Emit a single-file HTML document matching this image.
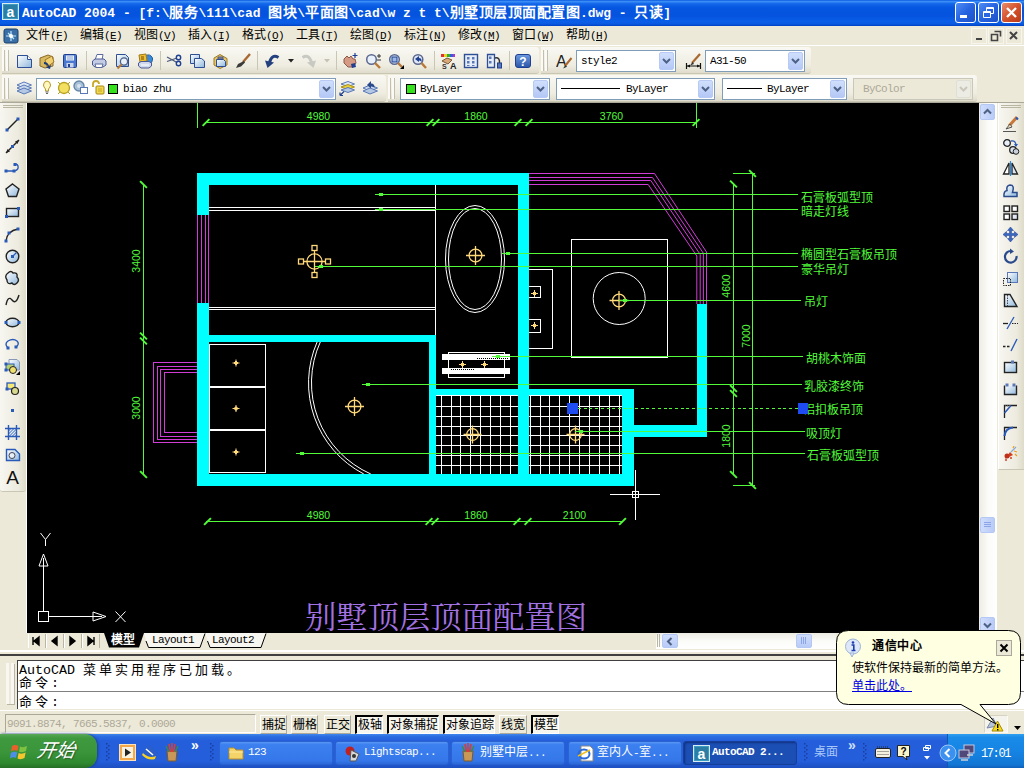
<!DOCTYPE html>
<html lang="zh-CN"><head><meta charset="utf-8"><title>AutoCAD 2004</title>
<style>
html,body{margin:0;padding:0}
body{width:1024px;height:768px;overflow:hidden;background:#ECE9D8;position:relative;font-family:"Liberation Sans",sans-serif;font-size:12px;color:#000;line-height:1}
div,span,a{box-sizing:border-box}
.a{position:absolute}
.m{font-family:"Liberation Mono",monospace;font-size:11px;letter-spacing:-0.6px}
.c{font-size:12px;letter-spacing:0;font-weight:300}
.t{white-space:nowrap;overflow:visible}
#title{left:0;top:0;width:1024px;height:26px;background:linear-gradient(180deg,#0a5ae0 0%,#3d8ff7 6%,#1468ea 14%,#0556e0 30%,#0553de 60%,#0a5ee8 82%,#0a5ae0 92%,#0041c4 100%)}
#ttext{left:22px;top:4px;color:#fff;font-family:"Liberation Mono",monospace;font-weight:bold;font-size:13px;letter-spacing:-0.04px;white-space:nowrap;line-height:17px}
#ttext .k{font-family:"Liberation Sans",sans-serif;font-size:14px;letter-spacing:0.5px;font-weight:bold}
.wb{top:2px;width:21px;height:21px;border:1px solid #fff;border-radius:3px;background:linear-gradient(135deg,#4f8df5 0%,#2663e0 50%,#1d52c8 100%)}
#menu{left:0;top:26px;width:1024px;height:20px;background:#ECE9D8}
.mi{top:30px;height:14px;white-space:nowrap;line-height:13px}
.tb{background:linear-gradient(180deg,#f9f8f3 0%,#efede1 70%,#dfdccc 100%);border-radius:0 3px 3px 0;border-bottom:1px solid #c9c6b4}
.dd{background:#fff;border:1px solid #7f9db9;height:22px}
.ddb{top:2px;width:16px;height:16px;border-radius:2px;background:linear-gradient(180deg,#cddcfb 0%,#b5c8f5 100%);border:1px solid #b8c9f0}
.sep{width:1px;background:#c5c2b0;border-right:1px solid #fff;width:2px}
.grip{width:3px;border-left:1px solid #b9b6a4;border-right:1px solid #b9b6a4}
</style></head><body>
<div id="title" class="a"></div>
<svg class="a" style="left:2px;top:3px" width="17" height="17" viewBox="0 0 17 17" ><rect x="0.5" y="0.5" width="16" height="16" fill="#3c9cc0" stroke="#d8ecf4"/><rect x="2" y="2" width="13" height="13" fill="#2a7ea6"/><text x="8.5" y="13.5" font-family="Liberation Sans,sans-serif" font-weight="bold" font-size="14" fill="#fff" text-anchor="middle">a</text></svg>
<div id="ttext" class="a">AutoCAD 2004 - [f:\<span class="k">服务</span>\111\cad <span class="k">图块</span>\<span class="k">平面图</span>\cad\w z t t\<span class="k">别墅顶层顶面配置图</span>.dwg - <span class="k">只读</span>]</div>
<div class="a wb" style="left:955px"></div><div class="a wb" style="left:978px"></div>
<div class="a wb" style="left:1001px;background:linear-gradient(135deg,#e88c6c 0%,#d4532c 50%,#b83a18 100%)"></div>
<svg class="a" style="left:955px;top:2px" width="21" height="21" viewBox="0 0 21 21" ><rect x="5" y="13" width="7" height="3" fill="#fff"/></svg>
<svg class="a" style="left:978px;top:2px" width="21" height="21" viewBox="0 0 21 21" ><path d="M8.500 5.500H15.500V11.500H8.500ZM8 6.500H16" stroke="#fff" stroke-width="1" fill="none"/><path d="M5.500 9.500H12.500V15.500H5.500Z" fill="#2a66e0" stroke="#fff"/><path d="M5 10.500H13" stroke="#fff"/></svg>
<svg class="a" style="left:1001px;top:2px" width="21" height="21" viewBox="0 0 21 21" ><path d="M6 6L15 15M15 6L6 15" stroke="#fff" stroke-width="2.4"/></svg>
<div id="menu" class="a"></div>
<svg class="a" style="left:3px;top:28px" width="17" height="16" viewBox="0 0 17 16" ><rect x="1" y="1" width="14" height="14" rx="2" fill="#3a6ea5" stroke="#1b3e6e"/><path d="M8 3V13M3 8H13M5 5L11 11" stroke="#bfe8ff" stroke-width="1.2"/><circle cx="8" cy="8" r="2" fill="#fff"/></svg>
<div class="a mi m" style="left:26px"><span class="c">文件</span>(<u>F</u>)</div>
<div class="a mi m" style="left:80px"><span class="c">编辑</span>(<u>E</u>)</div>
<div class="a mi m" style="left:134px"><span class="c">视图</span>(<u>V</u>)</div>
<div class="a mi m" style="left:188px"><span class="c">插入</span>(<u>I</u>)</div>
<div class="a mi m" style="left:242px"><span class="c">格式</span>(<u>O</u>)</div>
<div class="a mi m" style="left:296px"><span class="c">工具</span>(<u>T</u>)</div>
<div class="a mi m" style="left:350px"><span class="c">绘图</span>(<u>D</u>)</div>
<div class="a mi m" style="left:404px"><span class="c">标注</span>(<u>N</u>)</div>
<div class="a mi m" style="left:458px"><span class="c">修改</span>(<u>M</u>)</div>
<div class="a mi m" style="left:512px"><span class="c">窗口</span>(<u>W</u>)</div>
<div class="a mi m" style="left:566px"><span class="c">帮助</span>(<u>H</u>)</div>
<svg class="a" style="left:970px;top:27px" width="54" height="18" viewBox="0 0 54 18" ><rect x="6" y="11" width="6" height="2" fill="#444"/><path d="M24.500 4.500H30.500V9.500M21.500 7.500H27.500V13.500H21.500Z" stroke="#444" stroke-width="1.6" fill="none"/><path d="M40 5L47 12M47 5L40 12" stroke="#444" stroke-width="2"/><rect x="1.5" y="1.500" width="15" height="15" fill="none" stroke="#f6f5ee"/><rect x="18.500" y="1.500" width="15" height="15" fill="none" stroke="#f6f5ee"/><rect x="36.500" y="1.500" width="15" height="15" fill="none" stroke="#f6f5ee"/></svg>
<div class="a" style="left:0;top:45px;width:1024px;height:1px;background:#fff"></div>
<div class="a tb" style="left:2px;top:47px;width:537px;height:27px"></div>
<div class="a tb" style="left:541px;top:47px;width:270px;height:27px"></div>
<div class="a tb" style="left:2px;top:75px;width:384px;height:27px"></div>
<div class="a tb" style="left:388px;top:75px;width:589px;height:27px"></div>
<div class="a" style="left:2px;top:50px;height:21px;width:3px;background:#fbfaf6;border-right:1px solid #c2bfad"></div><div class="a" style="left:6px;top:50px;height:21px;width:3px;background:#fbfaf6;border-right:1px solid #c2bfad"></div>
<div class="a" style="left:541px;top:50px;height:21px;width:3px;background:#fbfaf6;border-right:1px solid #c2bfad"></div><div class="a" style="left:545px;top:50px;height:21px;width:3px;background:#fbfaf6;border-right:1px solid #c2bfad"></div>
<div class="a" style="left:2px;top:78px;height:21px;width:3px;background:#fbfaf6;border-right:1px solid #c2bfad"></div><div class="a" style="left:6px;top:78px;height:21px;width:3px;background:#fbfaf6;border-right:1px solid #c2bfad"></div>
<div class="a" style="left:388px;top:78px;height:21px;width:3px;background:#fbfaf6;border-right:1px solid #c2bfad"></div><div class="a" style="left:392px;top:78px;height:21px;width:3px;background:#fbfaf6;border-right:1px solid #c2bfad"></div>
<div class="a" style="left:86px;top:51px;width:1px;height:19px;background:#c9c6b3"></div>
<div class="a" style="left:160px;top:51px;width:1px;height:19px;background:#c9c6b3"></div>
<div class="a" style="left:257px;top:51px;width:1px;height:19px;background:#c9c6b3"></div>
<div class="a" style="left:336px;top:51px;width:1px;height:19px;background:#c9c6b3"></div>
<div class="a" style="left:434px;top:51px;width:1px;height:19px;background:#c9c6b3"></div>
<div class="a" style="left:509px;top:51px;width:1px;height:19px;background:#c9c6b3"></div>
<div class="a" style="left:576px;top:50px;width:100px;height:22px;background:#fff;border:1px solid #7f9db9"></div><div class="a m t" style="left:581px;top:56px">style2</div><div class="a" style="left:659px;top:52px;width:15px;height:18px;border-radius:2px;background:linear-gradient(180deg,#d0dffc,#b4c8f6);border:1px solid #b7caf5"><svg class="a" style="left:2px;top:5px" width="9" height="7" viewBox="0 0 9 7"><path d="M1 1L4.5 4.5L8 1" stroke="#4d6185" stroke-width="2" fill="none"/></svg></div>
<div class="a" style="left:705px;top:50px;width:100px;height:22px;background:#fff;border:1px solid #7f9db9"></div><div class="a m t" style="left:710px;top:56px">A31-50</div><div class="a" style="left:788px;top:52px;width:15px;height:18px;border-radius:2px;background:linear-gradient(180deg,#d0dffc,#b4c8f6);border:1px solid #b7caf5"><svg class="a" style="left:2px;top:5px" width="9" height="7" viewBox="0 0 9 7"><path d="M1 1L4.5 4.5L8 1" stroke="#4d6185" stroke-width="2" fill="none"/></svg></div>
<div class="a" style="left:36px;top:78px;width:300px;height:22px;background:#fff;border:1px solid #7f9db9"></div><div class="a m t" style="left:123px;top:84px">biao zhu</div><div class="a" style="left:108px;top:84px;width:10px;height:10px;background:#35e01c;border:1px solid #000"></div><div class="a" style="left:319px;top:80px;width:15px;height:18px;border-radius:2px;background:linear-gradient(180deg,#d0dffc,#b4c8f6);border:1px solid #b7caf5"><svg class="a" style="left:2px;top:5px" width="9" height="7" viewBox="0 0 9 7"><path d="M1 1L4.5 4.5L8 1" stroke="#4d6185" stroke-width="2" fill="none"/></svg></div>
<div class="a" style="left:400px;top:78px;width:150px;height:22px;background:#fff;border:1px solid #7f9db9"></div><div class="a m t" style="left:420px;top:84px">ByLayer</div><div class="a" style="left:406px;top:84px;width:10px;height:10px;background:#35e01c;border:1px solid #000"></div><div class="a" style="left:533px;top:80px;width:15px;height:18px;border-radius:2px;background:linear-gradient(180deg,#d0dffc,#b4c8f6);border:1px solid #b7caf5"><svg class="a" style="left:2px;top:5px" width="9" height="7" viewBox="0 0 9 7"><path d="M1 1L4.5 4.5L8 1" stroke="#4d6185" stroke-width="2" fill="none"/></svg></div>
<div class="a" style="left:556px;top:78px;width:159px;height:22px;background:#fff;border:1px solid #7f9db9"></div><div class="a m t" style="left:626px;top:84px">ByLayer</div><div class="a" style="left:561px;top:88px;width:59px;height:1px;background:#000"></div><div class="a" style="left:698px;top:80px;width:15px;height:18px;border-radius:2px;background:linear-gradient(180deg,#d0dffc,#b4c8f6);border:1px solid #b7caf5"><svg class="a" style="left:2px;top:5px" width="9" height="7" viewBox="0 0 9 7"><path d="M1 1L4.5 4.5L8 1" stroke="#4d6185" stroke-width="2" fill="none"/></svg></div>
<div class="a" style="left:722px;top:78px;width:125px;height:22px;background:#fff;border:1px solid #7f9db9"></div><div class="a m t" style="left:767px;top:84px">ByLayer</div><div class="a" style="left:727px;top:88px;width:35px;height:1px;background:#000"></div><div class="a" style="left:830px;top:80px;width:15px;height:18px;border-radius:2px;background:linear-gradient(180deg,#d0dffc,#b4c8f6);border:1px solid #b7caf5"><svg class="a" style="left:2px;top:5px" width="9" height="7" viewBox="0 0 9 7"><path d="M1 1L4.5 4.5L8 1" stroke="#4d6185" stroke-width="2" fill="none"/></svg></div>
<div class="a" style="left:853px;top:78px;width:120px;height:22px;background:#ECE9D8;border:1px solid #c9c7ba"></div><div class="a m t" style="left:863px;top:84px;color:#aca899">ByColor</div><div class="a" style="left:956px;top:80px;width:15px;height:18px;border-radius:2px;background:#ecebe4;border:1px solid #e0dfd6"><svg class="a" style="left:2px;top:5px" width="9" height="7" viewBox="0 0 9 7"><path d="M1 1L4.5 4.5L8 1" stroke="#c9c7ba" stroke-width="2" fill="none"/></svg></div>
<div class="a" style="left:0;top:102px;width:1024px;height:1px;background:#aca899"></div>
<svg width="0" height="0" style="position:absolute"><defs><linearGradient id="gb" x1="0" y1="0" x2="1" y2="1"><stop offset="0" stop-color="#ffffff"/><stop offset="1" stop-color="#8fb8dc"/></linearGradient><linearGradient id="gy" x1="0" y1="0" x2="1" y2="1"><stop offset="0" stop-color="#fff6b0"/><stop offset="1" stop-color="#e0b838"/></linearGradient><linearGradient id="gd" x1="0" y1="0" x2="0" y2="1"><stop offset="0" stop-color="#6f9be0"/><stop offset="1" stop-color="#2a56a8"/></linearGradient></defs></svg>
<svg class="a" style="left:16px;top:53px" width="17" height="17" viewBox="0 0 17 17"><path d="M1.500 2.500H11.500L15.500 6.500V14.500H1.500Z" fill="url(#gb)" stroke="#2f4f94"/><path d="M11.500 2.500V6.500H15.500" fill="#fff" stroke="#2f4f94"/></svg>
<svg class="a" style="left:39px;top:53px" width="17" height="17" viewBox="0 0 17 17"><path d="M1 5L9 2L14 4V13L6 15L1 13Z" fill="#d8b860" stroke="#8a6a28"/><path d="M6 7L13 3L15 9L8 14Z" fill="#f0d070" stroke="#a07828"/><path d="M5 9Q9 9 10 13L12 12L11 16L7 14.500L9 13.500Q8 11 5 11Z" fill="#1a3a78"/></svg>
<svg class="a" style="left:62px;top:53px" width="17" height="17" viewBox="0 0 17 17"><rect x="1.500" y="1.500" width="13" height="13" rx="1" fill="#4a78d0" stroke="#1f3f90"/><rect x="4" y="2.500" width="8" height="5" fill="#e8eef8"/><path d="M5 4H11M5 6H11" stroke="#8aa8d8"/><rect x="4.500" y="10" width="7" height="4.500" fill="#c8d4e8"/><rect x="6" y="11" width="2" height="3" fill="#1f3f90"/></svg>
<svg class="a" style="left:91px;top:53px" width="17" height="17" viewBox="0 0 17 17"><path d="M4 7L6 1.500H12L11 7Z" fill="#fff" stroke="#5a6a9c"/><path d="M1.500 8L4 6H13L15 8V12L12 14H4L1.500 12Z" fill="#c4cce4" stroke="#4a5a94"/><path d="M4 11H12L11 14.500H5Z" fill="#fff" stroke="#5a6a9c"/></svg>
<svg class="a" style="left:114px;top:53px" width="17" height="17" viewBox="0 0 17 17"><path d="M2.500 1.500H11.500L14.500 4.500V13.500H2.500Z" fill="url(#gb)" stroke="#2f4f94"/><circle cx="10" cy="8.500" r="3.600" fill="#e8f0fa" stroke="#506088" stroke-width="1.300"/><path d="M7.500 11.500L3.500 15.500" stroke="#b87838" stroke-width="2"/></svg>
<svg class="a" style="left:137px;top:53px" width="17" height="17" viewBox="0 0 17 17"><path d="M8 3Q13 0 15.500 5Q16 10 11 12L7 9Z" fill="#3a8ad8" stroke="#1f5aa8"/><path d="M2 2L9 1L10 8L3 9Z" fill="#f0c030" stroke="#a07818"/><path d="M4 4H7M4 6H7" stroke="#704808"/><path d="M1.500 10L4 8.500H12L14.500 10V13L12 15H4L1.500 13Z" fill="#d0d8ec" stroke="#4a5a94"/><path d="M4 12H12" stroke="#fff"/></svg>
<svg class="a" style="left:166px;top:53px" width="17" height="17" viewBox="0 0 17 17"><path d="M1 4L11 9.500M1 8.500L11 5" stroke="#4a5a7c" stroke-width="1.300"/><circle cx="12.500" cy="4.500" r="2.200" fill="none" stroke="#1f3f90" stroke-width="1.400"/><circle cx="12.500" cy="10.500" r="2.200" fill="none" stroke="#1f3f90" stroke-width="1.400"/></svg>
<svg class="a" style="left:189px;top:53px" width="17" height="17" viewBox="0 0 17 17"><path d="M1.500 1.500H10.500V10.500H1.500Z" fill="url(#gb)" stroke="#2f4f94"/><path d="M5.500 5.500H12.500L15.500 8V14.500H5.500Z" fill="url(#gb)" stroke="#2f4f94"/></svg>
<svg class="a" style="left:212px;top:53px" width="17" height="17" viewBox="0 0 17 17"><path d="M2 5L8 1.500L15 5.500V12L8 15.500L2 12Z" fill="#e8c868" stroke="#9a7a28"/><path d="M6 4H11V6H6Z" fill="#8890a8" stroke="#505878"/><path d="M4.500 6.500H11.500L13.500 8.500V13.500H4.500Z" fill="url(#gb)" stroke="#2f4f94"/></svg>
<svg class="a" style="left:235px;top:53px" width="17" height="17" viewBox="0 0 17 17"><path d="M15 1L8 9" stroke="#a86830" stroke-width="2.400"/><path d="M9 8L3 11L1 15L6 13.500L10 9.500Z" fill="#3a3a3a"/></svg>
<svg class="a" style="left:264px;top:53px" width="17" height="17" viewBox="0 0 17 17"><path d="M14.500 4.500Q8 0.500 5.500 9.500" fill="none" stroke="#23417e" stroke-width="3"/><path d="M1 7.500L10 9.500L3.500 15Z" fill="#23417e"/></svg>
<svg class="a" style="left:300px;top:53px" width="17" height="17" viewBox="0 0 17 17"><path d="M2.500 4.500Q9 0.500 11.500 9.500" fill="none" stroke="#c9c9c3" stroke-width="3"/><path d="M16 7.500L7 9.500L13.500 15Z" fill="#c9c9c3"/></svg>
<svg class="a" style="left:342px;top:53px" width="17" height="17" viewBox="0 0 17 17"><path d="M2 6L5 3L7 5L9 3L11 6L13 6L14 10L11 14H6L2 10Z" fill="#d49a84" stroke="#8a5a48"/><path d="M9 11L13 10L14 14L10 15Z" fill="#1f3f90"/><path d="M13 0V5M10.500 2.500H15.500" stroke="#1f3f90" stroke-width="1.200"/></svg>
<svg class="a" style="left:365px;top:53px" width="17" height="17" viewBox="0 0 17 17"><circle cx="6.500" cy="6.500" r="4.800" fill="#e8f0fa" stroke="#5a6890" stroke-width="1.500"/><path d="M10 10L15 15" stroke="#b87838" stroke-width="2.400"/><path d="M12 3H16M14 1V5M12 7H16" stroke="#333" stroke-width="1"/></svg>
<svg class="a" style="left:388px;top:53px" width="17" height="17" viewBox="0 0 17 17"><circle cx="6.500" cy="6.500" r="4.800" fill="#e8f0fa" stroke="#5a6890" stroke-width="1.500"/><rect x="4" y="4" width="5" height="5" fill="#9ab8e8" stroke="#1f3f90"/><path d="M10 10L14 14" stroke="#b87838" stroke-width="2.400"/><path d="M16 12V16H12Z" fill="#000"/></svg>
<svg class="a" style="left:411px;top:53px" width="17" height="17" viewBox="0 0 17 17"><circle cx="7" cy="6.500" r="4.800" fill="#dfe8f4" stroke="#5a6890" stroke-width="1.500"/><path d="M4 6L8 3V5Q11 5 10.500 9Q9.500 7 8 7.500V9Z" fill="#1f3f90"/><path d="M10.500 10L15 15" stroke="#b87838" stroke-width="2.400"/></svg>
<svg class="a" style="left:440px;top:53px" width="17" height="17" viewBox="0 0 17 17"><rect x="1" y="1" width="3" height="3" fill="#e03030"/><rect x="4" y="1" width="3" height="3" fill="#f0d020"/><rect x="7" y="1" width="3" height="3" fill="#30b030"/><rect x="10" y="1" width="3" height="3" fill="#3060e0"/><rect x="13" y="1" width="2" height="3" fill="#c030c0"/><path d="M2 8L7 5L12 7L8 11Z" fill="#d8a878" stroke="#7a5a38"/><text x="2" y="16" font-family="Liberation Sans,sans-serif" font-size="7" font-weight="bold" fill="#333">S</text><text x="10" y="16" font-family="Liberation Sans,sans-serif" font-size="9" font-weight="bold" fill="#222">A</text></svg>
<svg class="a" style="left:463px;top:53px" width="17" height="17" viewBox="0 0 17 17"><rect x="1.500" y="1.500" width="13" height="13" fill="#e8eef8" stroke="#2f4f94" stroke-width="1.400"/><rect x="4" y="4" width="2.500" height="2.500" fill="#5a78b8"/><rect x="9" y="4" width="2.500" height="2.500" fill="#5a78b8"/><rect x="4" y="8" width="2.500" height="2.500" fill="#5a78b8"/><rect x="9" y="8" width="2.500" height="2.500" fill="#5a78b8"/><path d="M4 12.500H6.500M9 12.500H11.500" stroke="#5a78b8"/></svg>
<svg class="a" style="left:486px;top:53px" width="17" height="17" viewBox="0 0 17 17"><path d="M1.500 1.500H8.500V14.500H1.500Z" fill="#e8eef8" stroke="#2f4f94" stroke-width="1.300"/><rect x="3" y="3.500" width="2.500" height="2.500" fill="#5a78b8"/><rect x="3" y="8" width="2.500" height="2.500" fill="#5a78b8"/><path d="M9 5Q14 4 13.500 10" stroke="#333" stroke-width="1.500" fill="none"/><rect x="11.500" y="10" width="4" height="5" fill="#5a78b8" stroke="#1f3f90"/></svg>
<svg class="a" style="left:515px;top:53px" width="17" height="17" viewBox="0 0 17 17"><rect x="0.500" y="1.500" width="15" height="13" rx="2.500" fill="url(#gd)" stroke="#1f3f90"/><text x="8" y="13" font-family="Liberation Sans,sans-serif" font-size="12" font-weight="bold" fill="#fff" text-anchor="middle">?</text></svg>
<svg class="a" style="left:556px;top:53px" width="17" height="17" viewBox="0 0 17 17"><text x="0" y="14" font-family="Liberation Sans,sans-serif" font-size="16" fill="#222">A</text><path d="M15.500 5L9 13" stroke="#a86830" stroke-width="2"/><path d="M9.500 12L7 15.500L10.500 14Z" fill="#333"/></svg>
<svg class="a" style="left:685px;top:53px" width="17" height="17" viewBox="0 0 17 17"><path d="M1.500 10V16M15.500 10V16M1.500 13H15.500" stroke="#111" stroke-width="1.200"/><path d="M2 13L5 11.500V14.500ZM15 13L12 11.500V14.500Z" fill="#111"/><path d="M15 1L7 10" stroke="#a86830" stroke-width="2.200"/><path d="M7.500 9L5 12.500L9 11Z" fill="#333"/></svg>
<svg class="a" style="left:288px;top:59px" width="6" height="4" viewBox="0 0 6 4"><path d="M0 0H6L3 3.500Z" fill="#222"/></svg>
<svg class="a" style="left:324px;top:59px" width="6" height="4" viewBox="0 0 6 4"><path d="M0 0H6L3 3.500Z" fill="#c4c2b4"/></svg>
<svg class="a" style="left:16px;top:80px" width="17" height="17" viewBox="0 0 17 17"><path d="M1 5L8 2L15.500 5L8 8Z" fill="#dfe8f4" stroke="#5a78b8"/><path d="M1 8L8 5L15.500 8L8 11Z" fill="#c8d8ec" stroke="#5a78b8"/><path d="M1 11L8 8L15.500 11L8 14Z" fill="#b4c8e4" stroke="#5a78b8"/></svg>
<svg class="a" style="left:42px;top:80px" width="11" height="16" viewBox="0 0 11 16"><path d="M5 1Q1.500 1.500 1.500 5Q1.500 7 3.500 9V11H6.500V9Q8.500 7 8.500 5Q8.500 1.500 5 1Z" fill="#fff8c0" stroke="#b89828"/><path d="M3.500 12H6.500M4 13.500H6" stroke="#666"/></svg>
<svg class="a" style="left:57px;top:81px" width="15" height="15" viewBox="0 0 15 15"><circle cx="7" cy="7" r="5.500" fill="#f4e060" stroke="#b8a020" stroke-width="1.300"/><path d="M1 1L3 3M13 1L11 3M1 13L3 11M13 13L11 11" stroke="#b8a020"/></svg>
<svg class="a" style="left:73px;top:80px" width="16" height="15" viewBox="0 0 16 15"><circle cx="6" cy="6" r="5" fill="#a8c0d8" stroke="#6888a8" stroke-width="1.400"/><circle cx="6" cy="6" r="2" fill="#d8e4f0"/><rect x="7.500" y="7.500" width="7" height="6" fill="#fff" stroke="#5a78b8"/></svg>
<svg class="a" style="left:91px;top:80px" width="15" height="15" viewBox="0 0 15 15"><path d="M2 7V4Q2 1 5 1Q8 1 8 4" fill="none" stroke="#c8a828" stroke-width="1.800"/><rect x="5" y="6" width="8" height="8" rx="1" fill="#f0d850" stroke="#a88818"/><path d="M7 9H11M7 11H11" stroke="#c8a828"/></svg>
<svg class="a" style="left:339px;top:80px" width="17" height="17" viewBox="0 0 17 17"><path d="M2 4L9 1.500L15.500 4L9 6.500Z" fill="#dfe8f4" stroke="#5a78b8"/><path d="M2 7L9 4.500L15.500 7L9 9.500Z" fill="#e8d040" stroke="#a89018"/><path d="M2 10L9 7.500L15.500 10L9 12.500Z" fill="#b4c8e4" stroke="#5a78b8"/><path d="M1 15.500L5 11.500M1 15.500V12.500M1 15.500H4" stroke="#1f3f90" stroke-width="1.200" fill="none"/></svg>
<svg class="a" style="left:362px;top:80px" width="17" height="17" viewBox="0 0 17 17"><path d="M1 8L8 5L15.500 8L8 11Z" fill="#c8d8ec" stroke="#5a78b8"/><path d="M1 11L8 8L15.500 11L8 14Z" fill="#b4c8e4" stroke="#5a78b8"/><path d="M5 5L9 1V3.500Q13 3.500 12.500 8Q11.500 6 9 6.500V8.500Z" fill="#2a4a8c"/></svg>
<svg class="a" style="left:27px;top:103px" width="952" height="530" viewBox="27 103 952 530">
<rect x="27" y="103" width="952" height="530" fill="#000"/>
<path d="M441.5 395V474M451.5 395V474M460.5 395V474M470.5 395V474M480.5 395V474M490.5 395V474M500.5 395V474M510.5 395V474M530.5 395V474M540.5 395V474M549.5 395V474M559.5 395V474M569.5 395V474M579.5 395V474M589.5 395V474M599.5 395V474M609.5 395V474M619.5 395V474M436 395.5H518M529 395.5H622M436 406.5H518M529 406.5H622M436 416.5H518M529 416.5H622M436 426.5H518M529 426.5H622M436 435.5H518M529 435.5H622M436 445.5H518M529 445.5H622M436 455.5H518M529 455.5H622M436 465.5H518M529 465.5H622" stroke="#fff" stroke-width="1" fill="none" shape-rendering="crispEdges"/>
<g fill="#00ffff" shape-rendering="crispEdges">
<rect x="197" y="173" width="332" height="12"/>
<rect x="197" y="173" width="12" height="42"/>
<rect x="197" y="303" width="12" height="183"/>
<rect x="197" y="474" width="437" height="12"/>
<rect x="518" y="173" width="11" height="313"/>
<rect x="209" y="335" width="227" height="7"/>
<rect x="429" y="335" width="7" height="139"/>
<rect x="436" y="389" width="198" height="6"/>
<rect x="622" y="389" width="12" height="97"/>
<rect x="634" y="425" width="73" height="12"/>
<rect x="697" y="304" width="10" height="133"/>
</g>
<g stroke="#d23cd6" stroke-width="1" fill="none" shape-rendering="crispEdges">
<path d="M197.5 215V303"/>
<path d="M201.5 215V303"/>
<path d="M205.5 215V303"/>
<path d="M208.5 215V303"/>
<path d="M197 362.5H153.5V442.5H197"/>
<path d="M197 366.5H157.5V439.5H197"/>
<path d="M197 369.5H160.5V436.5H197"/>
<path d="M197 372.5H164.5V432.5H197"/>
</g>
<g stroke="#d23cd6" stroke-width="1" fill="none">
<path d="M529 173.5H654.5L706.5 252V304"/>
<path d="M529 177.5H652.5L703.4 253.3V304"/>
<path d="M529 180.5H650.8L700.2 254.5V304"/>
<path d="M529 184.5H648.2L696.8 256V304"/>
</g>
<g stroke="#fff" stroke-width="1" fill="none" shape-rendering="crispEdges">
<path d="M209 207.5H435M209 210.5H435M209 307.5H435M209 309.5H435M435.5 185V335"/>
<path d="M209.5 344.5H265.5V472.5H209.5ZM209.5 386.5H265.5M209.5 387.5H265.5M209.5 429.5H265.5M209.5 430.5H265.5"/>
<rect x="571.5" y="239.5" width="96" height="118"/>
<path d="M529 269.5H552.5V348.5H529"/>
<path d="M529 286.5H540.5V297.5H529M529 319.5H540.5V332.5H529"/>
<rect x="448.5" y="352.5" width="56" height="25"/>
</g>
<rect x="442" y="354" width="68" height="6" fill="#fff"/><rect x="442" y="368" width="68" height="6" fill="#fff"/>
<path d="M477 358.5H508M451 369.5H474" stroke="#000" stroke-width="1" stroke-dasharray="1 1"/>
<g stroke="#fff" stroke-width="1" fill="none">
<ellipse cx="475" cy="259" rx="29.5" ry="53.5"/><ellipse cx="475" cy="259" rx="26.5" ry="50.5"/>
<circle cx="619.2" cy="298.5" r="26"/>
<path d="M317.1 342A102.5 102.5 0 0 0 363.8 474"/>
<path d="M320.3 342A99.5 99.5 0 0 0 370.8 474"/>
</g>
<g stroke="#ffd97a" fill="none" stroke-width="1.3"><circle cx="314.5" cy="261.5" r="7.6"/><path d="M303.5 261.5H325.5M314.5 250.5V272.5"/><rect x="325.5" y="259.0" width="5" height="5"/><rect x="298.5" y="259.0" width="5" height="5"/><rect x="312.0" y="272.5" width="5" height="5"/><rect x="312.0" y="245.5" width="5" height="5"/></g>
<g stroke="#ffd97a" fill="none" stroke-width="1.3"><circle cx="475.5" cy="255.5" r="6.4"/><path d="M466.0 255.5H485.0M475.5 246.0V265.0"/></g>
<g stroke="#ffd97a" fill="none" stroke-width="1.3"><circle cx="619" cy="300.5" r="6.4"/><path d="M609.5 300.5H628.5M619 291.0V310.0"/></g>
<g stroke="#ffd97a" fill="none" stroke-width="1.3"><circle cx="354.5" cy="406.5" r="6.4"/><path d="M345.0 406.5H364.0M354.5 397.0V416.0"/></g>
<g stroke="#ffd97a" fill="none" stroke-width="1.3"><circle cx="472.5" cy="434.5" r="5.8"/><path d="M463.5 434.5H481.5M472.5 425.5V443.5"/></g>
<g stroke="#ffd97a" fill="none" stroke-width="1.3"><circle cx="575.5" cy="434.5" r="5.8"/><path d="M566.5 434.5H584.5M575.5 425.5V443.5"/></g>
<g stroke="#ffd97a" fill="#ffd97a" stroke-width="1"><path d="M236 361L238 363L236 365L234 363Z"/><path d="M232.5 363H239.5M236 359.5V366.5" fill="none"/></g>
<g stroke="#ffd97a" fill="#ffd97a" stroke-width="1"><path d="M236 406.5L238 408.5L236 410.5L234 408.5Z"/><path d="M232.5 408.5H239.5M236 405.0V412.0" fill="none"/></g>
<g stroke="#ffd97a" fill="#ffd97a" stroke-width="1"><path d="M236 450L238 452L236 454L234 452Z"/><path d="M232.5 452H239.5M236 448.5V455.5" fill="none"/></g>
<g stroke="#ffd97a" fill="#ffd97a" stroke-width="1"><path d="M534.5 291.5L536.5 293.5L534.5 295.5L532.5 293.5Z"/><path d="M531.0 293.5H538.0M534.5 290.0V297.0" fill="none"/></g>
<g stroke="#ffd97a" fill="#ffd97a" stroke-width="1"><path d="M534.5 323.5L536.5 325.5L534.5 327.5L532.5 325.5Z"/><path d="M531.0 325.5H538.0M534.5 322.0V329.0" fill="none"/></g>
<g stroke="#ffd97a" fill="#ffd97a" stroke-width="1"><path d="M462.5 362.5L464.5 364.5L462.5 366.5L460.5 364.5Z"/><path d="M459.0 364.5H466.0M462.5 361.0V368.0" fill="none"/></g>
<g stroke="#ffd97a" fill="#ffd97a" stroke-width="1"><path d="M484.5 362.5L486.5 364.5L484.5 366.5L482.5 364.5Z"/><path d="M481.0 364.5H488.0M484.5 361.0V368.0" fill="none"/></g>
<g stroke="#52fa3a" stroke-width="1" fill="none" shape-rendering="crispEdges">
<path d="M375 194.5H798"/>
<path d="M375 209.5H798"/>
<path d="M502 253.5H798"/>
<path d="M315 266.5H798"/>
<path d="M619 300.5H801"/>
<path d="M492 356.5H803"/>
<path d="M362 384.5H802"/>
<path d="M575 431.5H805"/>
<path d="M296 453.5H805"/>
<path d="M578 408.5H798" stroke-dasharray="3 2.7"/>
<path d="M197.5 103V128M696.5 103V128M206 122.5H696"/>
<path d="M206 521.5H623"/>
<path d="M143.5 184V475"/>
<path d="M733.5 184V475M752.5 173V486M733 173.5H755M733 485.5H755"/>
</g>
<g fill="#52fa3a">
<rect x="379" y="193.0" width="4" height="3"/>
<rect x="379" y="208.0" width="4" height="3"/>
<rect x="506" y="252.0" width="4" height="3"/>
<rect x="319" y="265.0" width="4" height="3"/>
<rect x="623" y="299.0" width="4" height="3"/>
<rect x="496" y="355.0" width="4" height="3"/>
<rect x="366" y="383.0" width="4" height="3"/>
<rect x="579" y="430.0" width="4" height="3"/>
<rect x="300" y="452.0" width="4" height="3"/>
</g>
<path d="M202.6 125.9L209.4 119.1" stroke="#52fa3a" stroke-width="2" shape-rendering="auto"/>
<path d="M426.6 125.9L433.4 119.1" stroke="#52fa3a" stroke-width="2" shape-rendering="auto"/>
<path d="M432.6 125.9L439.4 119.1" stroke="#52fa3a" stroke-width="2" shape-rendering="auto"/>
<path d="M514.6 125.9L521.4 119.1" stroke="#52fa3a" stroke-width="2" shape-rendering="auto"/>
<path d="M525.6 125.9L532.4 119.1" stroke="#52fa3a" stroke-width="2" shape-rendering="auto"/>
<path d="M692.6 125.9L699.4 119.1" stroke="#52fa3a" stroke-width="2" shape-rendering="auto"/>
<path d="M204.1 524.9L210.9 518.1" stroke="#52fa3a" stroke-width="2" shape-rendering="auto"/>
<path d="M425.6 524.9L432.4 518.1" stroke="#52fa3a" stroke-width="2" shape-rendering="auto"/>
<path d="M431.6 524.9L438.4 518.1" stroke="#52fa3a" stroke-width="2" shape-rendering="auto"/>
<path d="M513.6 524.9L520.4 518.1" stroke="#52fa3a" stroke-width="2" shape-rendering="auto"/>
<path d="M524.6 524.9L531.4 518.1" stroke="#52fa3a" stroke-width="2" shape-rendering="auto"/>
<path d="M619.1 524.9L625.9 518.1" stroke="#52fa3a" stroke-width="2" shape-rendering="auto"/>
<path d="M140.1 181.1L146.9 187.9" stroke="#52fa3a" stroke-width="2"/>
<path d="M140.1 332.6L146.9 339.4" stroke="#52fa3a" stroke-width="2"/>
<path d="M140.1 337.6L146.9 344.4" stroke="#52fa3a" stroke-width="2"/>
<path d="M140.1 471.1L146.9 477.9" stroke="#52fa3a" stroke-width="2"/>
<path d="M730.1 180.6L736.9 187.4" stroke="#52fa3a" stroke-width="2"/>
<path d="M730.1 385.1L736.9 391.9" stroke="#52fa3a" stroke-width="2"/>
<path d="M730.1 390.1L736.9 396.9" stroke="#52fa3a" stroke-width="2"/>
<path d="M730.1 471.1L736.9 477.9" stroke="#52fa3a" stroke-width="2"/>
<path d="M749.1 170.1L755.9 176.9" stroke="#52fa3a" stroke-width="2"/>
<path d="M749.1 482.1L755.9 488.9" stroke="#52fa3a" stroke-width="2"/>
<g fill="#52fa3a" font-family="Liberation Sans,sans-serif" font-size="11.4" text-anchor="middle">
<text transform="translate(318.5 120.3) scale(0.92 1)">4980</text>
<text transform="translate(476 120.3) scale(0.92 1)">1860</text>
<text transform="translate(611.5 120.3) scale(0.92 1)">3760</text>
<text transform="translate(318.5 519.3) scale(0.92 1)">4980</text>
<text transform="translate(476 519.3) scale(0.92 1)">1860</text>
<text transform="translate(574.5 519.3) scale(0.92 1)">2100</text>
<text transform="translate(140 261) rotate(-90) scale(0.92 1)">3400</text>
<text transform="translate(140 408) rotate(-90) scale(0.92 1)">3000</text>
<text transform="translate(730 286) rotate(-90) scale(0.92 1)">4600</text>
<text transform="translate(730 436) rotate(-90) scale(0.92 1)">1800</text>
<text transform="translate(749.5 336) rotate(-90) scale(0.92 1)">7000</text>
</g>
<g fill="#52fa3a" font-family="Liberation Sans,sans-serif" font-size="12">
<text x="801" y="201.5">石膏板弧型顶</text>
<text x="801" y="216">暗走灯线</text>
<text x="801" y="259">椭圆型石膏板吊顶</text>
<text x="801" y="273.5">豪华吊灯</text>
<text x="803.5" y="306">吊灯</text>
<text x="805.5" y="363">胡桃木饰面</text>
<text x="804" y="391">乳胶漆终饰</text>
<text x="803" y="414">铝扣板吊顶</text>
<text x="806" y="437.5">吸顶灯</text>
<text x="807" y="459.5">石膏板弧型顶</text>
</g>
<rect x="567" y="403" width="11" height="11" fill="#1f4cf0"/><rect x="798" y="403" width="10" height="11" fill="#1f4cf0"/>
<g stroke="#fff" stroke-width="1" fill="none" shape-rendering="crispEdges"><path d="M610 494.5H660M635.5 470V520"/><rect x="632.5" y="491.5" width="6" height="6"/></g>
<g stroke="#fff" stroke-width="1" fill="none"><rect x="38.5" y="611.5" width="10" height="10" shape-rendering="crispEdges"/><path d="M43.5 611V566M49 616.5H93" shape-rendering="crispEdges"/><path d="M43.5 554L39 566H48ZM43.5 558V566M106 616.5L93 612V621ZM93 616.5H102"/><path d="M40.5 533L45.5 539.5L50.5 533M45.5 539.5V546M115.5 611.5L125.5 622M125.5 611.5L115.5 622"/></g>
<text x="305" y="628" fill="#a272e2" font-family="Liberation Serif,Noto Serif CJK SC,serif" font-size="31.2" textLength="282" lengthAdjust="spacingAndGlyphs">别墅顶层顶面配置图</text>
</svg>
<div class="a" style="left:0;top:103px;width:26px;height:389px;background:linear-gradient(90deg,#f7f6f0,#edebdf 70%,#dedbc9);border-bottom:1px solid #c9c6b4;border-radius:0 0 3px 3px"></div>
<div class="a" style="left:26px;top:103px;width:1px;height:530px;background:#fff"></div>
<div class="a" style="left:3px;top:105px;width:20px;height:3px;border-top:1px solid #b9b6a4;border-bottom:1px solid #b9b6a4"></div>
<div class="a" style="left:979px;top:103px;width:18px;height:530px;background:linear-gradient(90deg,#ecebe3,#fbfbf8 50%,#fff)"></div>
<div class="a" style="left:980px;top:104px;width:15px;height:16px;border:1px solid #b4c8f6;border-radius:2px;background:linear-gradient(90deg,#cfdcfb,#b9cbf7)"></div><svg class="a" style="left:983px;top:108px" width="9" height="7" viewBox="0 0 9 7" ><path d="M1 5.500L4.500 2L8 5.500" stroke="#4d6185" stroke-width="2" fill="none"/></svg>
<div class="a" style="left:980px;top:617px;width:15px;height:16px;border:1px solid #b4c8f6;border-radius:2px;background:linear-gradient(90deg,#cfdcfb,#b9cbf7)"></div><svg class="a" style="left:983px;top:622px" width="9" height="7" viewBox="0 0 9 7" ><path d="M1 1.500L4.500 5L8 1.500" stroke="#4d6185" stroke-width="2" fill="none"/></svg>
<div class="a" style="left:980px;top:517px;width:15px;height:16px;border:1px solid #b4c8f6;border-radius:2px;background:linear-gradient(90deg,#cfdcfb,#b9cbf7)"></div><svg class="a" style="left:984px;top:521px" width="8" height="8" viewBox="0 0 8 8" ><path d="M0 1.500H7M0 3.500H7M0 5.500H7" stroke="#8aa6e8" stroke-width="1"/></svg>
<div class="a" style="left:998px;top:103px;width:26px;height:367px;background:linear-gradient(90deg,#f7f6f0,#edebdf 70%,#dedbc9);border-bottom:1px solid #c9c6b4;border-left:1px solid #fff"></div>
<div class="a" style="left:1001px;top:105px;width:20px;height:3px;border-top:1px solid #b9b6a4;border-bottom:1px solid #b9b6a4"></div>
<svg class="a" style="left:4px;top:116px" width="18" height="18" viewBox="0 0 18 18"><path d="M3 14L14 3" stroke="#222" stroke-width="1.400"/><rect x="1.5" y="12.5" width="3" height="3" fill="#2a5ab8"/><rect x="12.5" y="1.5" width="3" height="3" fill="#2a5ab8"/></svg>
<svg class="a" style="left:4px;top:138px" width="18" height="18" viewBox="0 0 18 18"><path d="M2 15L15 2" stroke="#222" stroke-width="1.400"/><path d="M15 2L11 3.500L13.500 6ZM2 15L6 13.500L3.500 11Z" fill="#222"/><rect x="7.0" y="7.0" width="3" height="3" fill="#2a5ab8"/></svg>
<svg class="a" style="left:4px;top:160px" width="18" height="18" viewBox="0 0 18 18"><path d="M2 11H10Q15 10 14 6Q13 3 10 5" stroke="#2a5ab8" stroke-width="1.400" fill="none"/><rect x="0.5" y="9.5" width="3" height="3" fill="#2a5ab8"/><rect x="8.5" y="9.5" width="3" height="3" fill="#2a5ab8"/><rect x="9.5" y="3.0" width="3" height="3" fill="#2a5ab8"/></svg>
<svg class="a" style="left:4px;top:182px" width="18" height="18" viewBox="0 0 18 18"><path d="M8.500 2L15 7L12.500 14.500H4.500L2 7Z" fill="url(#gb)" stroke="#222" stroke-width="1.400"/></svg>
<svg class="a" style="left:4px;top:204px" width="18" height="18" viewBox="0 0 18 18"><rect x="2.500" y="4.500" width="12" height="8" fill="url(#gb)" stroke="#222" stroke-width="1.400"/><rect x="1.0" y="11.0" width="3" height="3" fill="#2a5ab8"/><rect x="13.0" y="3.0" width="3" height="3" fill="#2a5ab8"/></svg>
<svg class="a" style="left:4px;top:226px" width="18" height="18" viewBox="0 0 18 18"><path d="M2 15Q3 5 14 3" stroke="#222" stroke-width="1.400" fill="none"/><rect x="0.5" y="13.5" width="3" height="3" fill="#2a5ab8"/><rect x="12.5" y="1.5" width="3" height="3" fill="#2a5ab8"/><rect x="3.5" y="5.5" width="3" height="3" fill="#2a5ab8"/></svg>
<svg class="a" style="left:4px;top:248px" width="18" height="18" viewBox="0 0 18 18"><circle cx="8.500" cy="8.500" r="6.300" fill="url(#gb)" stroke="#222" stroke-width="1.400"/><path d="M8.500 8.500L12.500 4.500" stroke="#2a5ab8" stroke-width="1.200"/><rect x="7.0" y="7.0" width="3" height="3" fill="#2a5ab8"/></svg>
<svg class="a" style="left:4px;top:270px" width="18" height="18" viewBox="0 0 18 18"><path d="M4 3Q7 0 9 3Q14 2 13 7Q16 10 13 13Q10 16 8 13Q3 15 3 10Q0 6 4 3Z" fill="url(#gb)" stroke="#222" stroke-width="1.400"/></svg>
<svg class="a" style="left:4px;top:292px" width="18" height="18" viewBox="0 0 18 18"><path d="M2 13Q4 3 8 8Q12 13 15 3" stroke="#222" stroke-width="1.400" fill="none"/></svg>
<svg class="a" style="left:4px;top:314px" width="18" height="18" viewBox="0 0 18 18"><ellipse cx="8.500" cy="8.500" rx="6.500" ry="4.200" fill="url(#gb)" stroke="#222" stroke-width="1.400"/><rect x="0.5" y="7.0" width="3" height="3" fill="#2a5ab8"/><rect x="13.5" y="7.0" width="3" height="3" fill="#2a5ab8"/></svg>
<svg class="a" style="left:4px;top:336px" width="18" height="18" viewBox="0 0 18 18"><path d="M4 12Q0 8 4 5Q9 2 13 5Q16 8 12 11" fill="none" stroke="#2a5ab8" stroke-width="1.400"/><rect x="2.5" y="10.5" width="3" height="3" fill="#2a5ab8"/><rect x="10.5" y="9.5" width="3" height="3" fill="#2a5ab8"/></svg>
<svg class="a" style="left:4px;top:358px" width="18" height="18" viewBox="0 0 18 18"><path d="M5 1.500H13L15.500 4V12H5Z" fill="url(#gb)" stroke="#8898b8"/><rect x="2" y="6" width="8" height="6" fill="#b8d070" stroke="#2a5ab8"/><circle cx="9" cy="12" r="3.500" fill="#f0e070" stroke="#222"/><path d="M16 13V17H12Z" fill="#000"/><rect x="0.5" y="4.5" width="3" height="3" fill="#2a5ab8"/><rect x="0.5" y="10.5" width="3" height="3" fill="#2a5ab8"/></svg>
<svg class="a" style="left:4px;top:380px" width="18" height="18" viewBox="0 0 18 18"><rect x="3" y="3" width="8" height="6" fill="#f4e878" stroke="#2a5ab8" stroke-width="1.300"/><circle cx="11" cy="11" r="3.500" fill="#d8d890" stroke="#222" stroke-width="1.200"/><rect x="1.5" y="7.5" width="3" height="3" fill="#2a5ab8"/></svg>
<svg class="a" style="left:4px;top:402px" width="18" height="18" viewBox="0 0 18 18"><rect x="7.0" y="7.0" width="3" height="3" fill="#2a5ab8"/></svg>
<svg class="a" style="left:4px;top:424px" width="18" height="18" viewBox="0 0 18 18"><rect x="4" y="4" width="9" height="9" fill="#8aa8d8" stroke="none"/><path d="M4 6L6 4M4 9L9 4M4 12L12 4M6 13L13 6M9 13L13 9" stroke="#fff" stroke-width="0.800"/><path d="M1 4.500H16M1 12.500H16M4.500 1V16M12.500 1V16" stroke="#2a5ab8" stroke-width="1.400"/></svg>
<svg class="a" style="left:4px;top:446px" width="18" height="18" viewBox="0 0 18 18"><path d="M2.500 3.500H11L15.500 8V14.500H2.500Z" fill="url(#gb)" stroke="#2a5ab8" stroke-width="1.400"/><circle cx="8" cy="9.500" r="3" fill="#e8eef8" stroke="#445"/></svg>
<svg class="a" style="left:4px;top:468px" width="18" height="18" viewBox="0 0 18 18"><text x="8.500" y="16" font-family="Liberation Sans,sans-serif" font-size="19" fill="#111" text-anchor="middle">A</text></svg>
<svg class="a" style="left:1002px;top:116px" width="18" height="18" viewBox="0 0 18 18"><path d="M15 1L7 10" stroke="#c87838" stroke-width="3"/><path d="M8 8L4 13L10 11Z" fill="#f0e0c0" stroke="#555"/><path d="M1 15.500H14" stroke="#555"/><path d="M14 1.500L16 3.500" stroke="#2a5ab8" stroke-width="2"/></svg>
<svg class="a" style="left:1002px;top:138px" width="18" height="18" viewBox="0 0 18 18"><circle cx="5" cy="5" r="3.300" fill="#e8eef8" stroke="#222" stroke-width="1.300"/><circle cx="11" cy="12" r="3.300" fill="#d8e0ec" stroke="#222" stroke-width="1.300"/><circle cx="14" cy="13.500" r="2.800" fill="#c8d0dc" stroke="#222"/><path d="M9 3Q14 2 14 8" fill="none" stroke="#2a5ab8" stroke-width="1.300"/><path d="M14 9L12 6H16Z" fill="#2a5ab8"/></svg>
<svg class="a" style="left:1002px;top:160px" width="18" height="18" viewBox="0 0 18 18"><path d="M7 3V14H1.500Z" fill="#fff" stroke="#222" stroke-width="1.300"/><path d="M10 3V14H15.500Z" fill="#d8e4f4" stroke="#222" stroke-width="1.300"/><path d="M8.500 1V16" stroke="#2a8ad8" stroke-width="1.200"/></svg>
<svg class="a" style="left:1002px;top:182px" width="18" height="18" viewBox="0 0 18 18"><path d="M2 14.500H15V10.500H10.500Q13 3 8 3Q4 3.500 5 8.500Q1.500 9 2 14.500Z" fill="url(#gb)" stroke="#2a4a8c" stroke-width="1.500"/></svg>
<svg class="a" style="left:1002px;top:204px" width="18" height="18" viewBox="0 0 18 18"><rect x="2" y="2" width="5.500" height="5.500" fill="#fff" stroke="#222" stroke-width="1.400"/><rect x="10" y="2" width="5.500" height="5.500" fill="#fff" stroke="#222" stroke-width="1.400"/><rect x="2" y="10" width="5.500" height="5.500" fill="#fff" stroke="#222" stroke-width="1.400"/><rect x="10" y="10" width="5.500" height="5.500" fill="#dfe8f4" stroke="#222" stroke-width="1.400"/></svg>
<svg class="a" style="left:1002px;top:226px" width="18" height="18" viewBox="0 0 18 18"><path d="M8.500 1L11.500 4.500H9.500V7.500H12.500V5.500L16 8.500L12.500 11.500V9.500H9.500V12.500H11.500L8.500 16L5.500 12.500H7.500V9.500H4.500V11.500L1 8.500L4.500 5.500V7.500H7.500V4.500H5.500Z" fill="#3a68c0" stroke="#1f3f90" stroke-width="0.500"/></svg>
<svg class="a" style="left:1002px;top:248px" width="18" height="18" viewBox="0 0 18 18"><path d="M9 3A5.800 5.800 0 1 0 14.500 8" fill="none" stroke="#2a4a8c" stroke-width="2.200"/><path d="M8 0.500L12 3.500L8 6Z" fill="#2a4a8c"/></svg>
<svg class="a" style="left:1002px;top:270px" width="18" height="18" viewBox="0 0 18 18"><rect x="5.500" y="2.500" width="10" height="10" fill="url(#gb)" stroke="#5a78b8"/><rect x="1.500" y="8.500" width="7" height="7" fill="none" stroke="#222" stroke-dasharray="1.500 1"/></svg>
<svg class="a" style="left:1002px;top:292px" width="18" height="18" viewBox="0 0 18 18"><path d="M2.500 2.500H8L15 14.500H2.500Z" fill="url(#gb)" stroke="#222" stroke-width="1.400"/><path d="M5.500 3V14" stroke="#445" stroke-dasharray="1.500 1"/></svg>
<svg class="a" style="left:1002px;top:314px" width="18" height="18" viewBox="0 0 18 18"><path d="M1 9.500H6" stroke="#222" stroke-width="1.300"/><path d="M10 9.500H16" stroke="#222" stroke-dasharray="1.500 1"/><path d="M5 15L12 3" stroke="#2a5ab8" stroke-width="1.300"/></svg>
<svg class="a" style="left:1002px;top:336px" width="18" height="18" viewBox="0 0 18 18"><path d="M1 10.500H9" stroke="#222" stroke-width="1.300" stroke-dasharray="2.500 1.500"/><path d="M9 15L15 3" stroke="#2a5ab8" stroke-width="1.400"/></svg>
<svg class="a" style="left:1002px;top:358px" width="18" height="18" viewBox="0 0 18 18"><rect x="2.500" y="4.500" width="12" height="10" fill="url(#gb)" stroke="#222" stroke-width="1.400"/><rect x="9" y="2.500" width="3" height="3" fill="#5a78b8"/></svg>
<svg class="a" style="left:1002px;top:380px" width="18" height="18" viewBox="0 0 18 18"><path d="M2.500 5.500V14.500H14.500V5.500" fill="url(#gb)" stroke="#222" stroke-width="1.400"/><rect x="3.500" y="3.500" width="3" height="3" fill="#5a78b8"/><rect x="10.500" y="3.500" width="3" height="3" fill="#5a78b8"/></svg>
<svg class="a" style="left:1002px;top:402px" width="18" height="18" viewBox="0 0 18 18"><path d="M2.500 16V3.500H15" stroke="#222" stroke-width="1.300" fill="none"/><path d="M2.500 11L9 3.500" stroke="#2a5ab8" stroke-width="1.500"/><path d="M3 4H8" stroke="#888" stroke-dasharray="1 1"/></svg>
<svg class="a" style="left:1002px;top:424px" width="18" height="18" viewBox="0 0 18 18"><path d="M2.500 16V3.500H15" stroke="#222" stroke-width="1.300" fill="none"/><path d="M2.500 12Q3 4.500 11 3.500" stroke="#2a5ab8" stroke-width="2.200" fill="none"/></svg>
<svg class="a" style="left:1002px;top:446px" width="18" height="18" viewBox="0 0 18 18"><path d="M3 13L8 6L11 9Z" fill="#d04020"/><circle cx="5" cy="10" r="2.500" fill="#c03018"/><path d="M9 6L14 1" stroke="#8aa8d8" stroke-width="1.200"/><path d="M12 5L15 6M11 2L12 0M13 8L15 10" stroke="#e8a020" stroke-width="1.200"/><circle cx="4" cy="14" r="1" fill="#d04020"/><circle cx="9" cy="12" r="1" fill="#d04020"/></svg>
<div class="a" style="left:27px;top:633px;width:953px;height:16px;background:#ECE9D8"></div>
<div class="a" style="left:28px;top:634px;width:18px;height:14px;border-right:1px solid #b9b6a4;border-left:1px solid #fff"></div>
<div class="a" style="left:46px;top:634px;width:18px;height:14px;border-right:1px solid #b9b6a4;border-left:1px solid #fff"></div>
<div class="a" style="left:64px;top:634px;width:18px;height:14px;border-right:1px solid #b9b6a4;border-left:1px solid #fff"></div>
<div class="a" style="left:82px;top:634px;width:18px;height:14px;border-right:1px solid #b9b6a4;border-left:1px solid #fff"></div>
<svg class="a" style="left:28px;top:634px" width="72" height="14" viewBox="0 0 72 14" ><path d="M5 3V11M11 3L6 7L11 11ZM29 3L24 7L29 11ZM42 3L47 7L42 11ZM60 3L65 7L60 11ZM66 3V11" fill="#000" stroke="#000" stroke-width="1.4"/></svg>
<svg class="a" style="left:101px;top:633px" width="170" height="16" viewBox="0 0 170 16" ><path d="M3 0L8 14.500H38L43 0Z" fill="#000"/><path d="M43 0L47 14.500H99L104 0ZM104 0L109 14.500H160L165 0Z" fill="#f7f6f0" stroke="none"/><path d="M45 8L47.500 14.500H99L104 0.500M106.500 8L109 14.500H160L165 0.500" fill="none" stroke="#000" stroke-width="1"/></svg>
<div class="a t" style="left:111px;top:634px;color:#fff;font-weight:bold;font-size:12px">模型</div>
<div class="a t m" style="left:152px;top:635px">Layout1</div><div class="a t m" style="left:212px;top:635px">Layout2</div>
<div class="a" style="left:656px;top:633px;width:180px;height:16px;background:linear-gradient(180deg,#ecebe3,#fbfbf8 50%,#fff)"></div>
<div class="a" style="left:657px;top:634px;width:3px;height:13px;border-left:1px solid #b9b6a4;border-right:1px solid #b9b6a4"></div>
<div class="a" style="left:662px;top:634px;width:16px;height:14px;border:1px solid #b4c8f6;border-radius:2px;background:linear-gradient(180deg,#cfdcfb,#b9cbf7)"></div><svg class="a" style="left:666px;top:637px" width="7" height="9" viewBox="0 0 7 9" ><path d="M5.500 1L2 4.500L5.500 8" stroke="#4d6185" stroke-width="2" fill="none"/></svg>
<div class="a" style="left:796px;top:634px;width:16px;height:14px;border:1px solid #b4c8f6;border-radius:2px;background:linear-gradient(180deg,#cfdcfb,#b9cbf7)"></div><svg class="a" style="left:800px;top:637px" width="8" height="8" viewBox="0 0 8 8" ><path d="M1.500 0V7M3.500 0V7M5.500 0V7" stroke="#8aa6e8" stroke-width="1"/></svg>
<div class="a" style="left:0;top:650px;width:1024px;height:2px;background:#fff"></div>
<div class="a" style="left:0;top:654px;width:1024px;height:2px;background:#404040"></div>
<div class="a" style="left:6px;top:663px;width:8px;height:41px;border-left:3px solid #f8f7f1;border-right:3px solid #f8f7f1;box-shadow:1px 1px 0 #b9b6a4"></div>
<div class="a" style="left:17px;top:660px;width:1007px;height:49px;background:#fff;border-left:1px solid #404040;border-top:1px solid #404040"></div>
<div class="a" style="left:18px;top:691px;width:1006px;height:1px;background:#808080"></div>
<div class="a" style="left:19px;top:663px;font-family:'Liberation Mono',monospace;font-size:13.33px;white-space:nowrap;line-height:13px">AutoCAD <span style="font-family:'Liberation Sans',sans-serif;font-size:13px;letter-spacing:3px">菜单实用程序已加载。</span></div>
<div class="a" style="left:19px;top:676px;font-family:'Liberation Mono',monospace;font-size:13.33px;white-space:nowrap;line-height:13px"><span style="font-family:'Liberation Sans',sans-serif;font-size:13px;letter-spacing:3px">命令</span>:</div>
<div class="a" style="left:19px;top:695px;font-family:'Liberation Mono',monospace;font-size:13.33px;white-space:nowrap;line-height:13px"><span style="font-family:'Liberation Sans',sans-serif;font-size:13px;letter-spacing:3px">命令</span>:</div>
<div class="a" style="left:0;top:710px;width:1024px;height:1px;background:#fff"></div>
<div class="a" style="left:5px;top:714px;width:251px;height:19px;border:1px solid #aca899;border-right-color:#fff;border-bottom-color:#fff"></div>
<div class="a m t" style="left:7px;top:719px;color:#aca899">9091.8874, 7665.5837, 0.0000</div>
<div class="a" style="left:260px;top:715px;width:27px;height:19px;border:1px solid #fff;border-right-color:#aca899;border-bottom-color:#aca899"></div><div class="a t c" style="left:262px;top:719px">捕捉</div>
<div class="a" style="left:291px;top:715px;width:27px;height:19px;border:1px solid #fff;border-right-color:#aca899;border-bottom-color:#aca899"></div><div class="a t c" style="left:293px;top:719px">栅格</div>
<div class="a" style="left:324px;top:715px;width:27px;height:19px;border:1px solid #fff;border-right-color:#aca899;border-bottom-color:#aca899"></div><div class="a t c" style="left:326px;top:719px">正交</div>
<div class="a" style="left:355px;top:715px;width:28px;height:19px;border:1px solid #000;border-right-color:#fff;border-bottom-color:#fff;border-left-width:2px;border-top-width:2px;background:#f6f5ee"></div><div class="a t c" style="left:358px;top:719px">极轴</div>
<div class="a" style="left:387px;top:715px;width:52px;height:19px;border:1px solid #000;border-right-color:#fff;border-bottom-color:#fff;border-left-width:2px;border-top-width:2px;background:#f6f5ee"></div><div class="a t c" style="left:390px;top:719px">对象捕捉</div>
<div class="a" style="left:443px;top:715px;width:52px;height:19px;border:1px solid #000;border-right-color:#fff;border-bottom-color:#fff;border-left-width:2px;border-top-width:2px;background:#f6f5ee"></div><div class="a t c" style="left:446px;top:719px">对象追踪</div>
<div class="a" style="left:499px;top:715px;width:28px;height:19px;border:1px solid #fff;border-right-color:#aca899;border-bottom-color:#aca899"></div><div class="a t c" style="left:501px;top:719px">线宽</div>
<div class="a" style="left:531px;top:715px;width:28px;height:19px;border:1px solid #000;border-right-color:#fff;border-bottom-color:#fff;border-left-width:2px;border-top-width:2px;background:#f6f5ee"></div><div class="a t c" style="left:534px;top:719px">模型</div>
<div class="a" style="left:984px;top:715px;width:24px;height:18px;background:#f4f3ec;border:1px solid #fbfaf6;border-left-color:#d6d3c2;border-top-color:#d6d3c2"></div>
<svg class="a" style="left:984px;top:714px" width="40" height="20" viewBox="0 0 40 20" ><path d="M3 14L9 4L13 12Z" fill="#b8c4d8" stroke="#7a8aa8"/><path d="M8 17L13.500 7L19 17Z" fill="#f7d820" stroke="#a88c00"/><rect x="13" y="10" width="1.400" height="4" fill="#000"/><rect x="13" y="15" width="1.400" height="1.400" fill="#000"/><path d="M30 12H37L33.500 16Z" fill="#000"/></svg>
<div class="a" style="left:0;top:734px;width:1024px;height:34px;background:linear-gradient(180deg,#3e86ec 0%,#2a6ce0 8%,#245edb 20%,#245edb 80%,#1d4fc0 100%)"></div>
<div class="a" style="left:0;top:734px;width:97px;height:34px;border-radius:0 12px 12px 0;background:linear-gradient(180deg,#58a858 0%,#3f9a3f 12%,#3b953b 50%,#2f8a2f 85%,#256f25 100%);box-shadow:1px 0 3px #1b3f90"></div>
<svg class="a" style="left:10px;top:743px" width="20" height="18" viewBox="0 0 20 18" ><path d="M2 3Q5 1 8.500 3L7.500 8Q4.500 6.500 1 8.500Z" fill="#e8602c"/><path d="M10 3.500Q13 5 17 3L16 8Q12.500 10 9 8.500Z" fill="#7ec242"/><path d="M0.800 10Q4 8 7.200 9.500L6 15Q3 13.500 0 15.500Z" fill="#4d8fe8"/><path d="M8.600 10Q12 11.500 15.600 9.500L14.500 15Q11 17 7.500 15.500Z" fill="#f7c52c"/></svg>
<div class="a t" style="left:37px;top:741px;color:#fff;font-style:italic;font-size:19px;text-shadow:1px 1px 1px #2b5f2b;transform:skewX(-10deg)">开始</div>
<svg class="a" style="left:105px;top:742px" width="5" height="20" viewBox="0 0 5 20" ><rect x="1" y="1" width="1.500" height="1.500" fill="#1a3f9e"/><rect x="3" y="3" width="1.500" height="1.500" fill="#1a3f9e"/><rect x="1" y="5" width="1.500" height="1.500" fill="#1a3f9e"/><rect x="3" y="7" width="1.500" height="1.500" fill="#1a3f9e"/><rect x="1" y="9" width="1.500" height="1.500" fill="#1a3f9e"/><rect x="3" y="11" width="1.500" height="1.500" fill="#1a3f9e"/><rect x="1" y="13" width="1.500" height="1.500" fill="#1a3f9e"/><rect x="3" y="15" width="1.500" height="1.500" fill="#1a3f9e"/><rect x="1" y="17" width="1.500" height="1.500" fill="#1a3f9e"/></svg>
<svg class="a" style="left:209px;top:742px" width="5" height="20" viewBox="0 0 5 20" ><rect x="1" y="1" width="1.500" height="1.500" fill="#1a3f9e"/><rect x="3" y="3" width="1.500" height="1.500" fill="#1a3f9e"/><rect x="1" y="5" width="1.500" height="1.500" fill="#1a3f9e"/><rect x="3" y="7" width="1.500" height="1.500" fill="#1a3f9e"/><rect x="1" y="9" width="1.500" height="1.500" fill="#1a3f9e"/><rect x="3" y="11" width="1.500" height="1.500" fill="#1a3f9e"/><rect x="1" y="13" width="1.500" height="1.500" fill="#1a3f9e"/><rect x="3" y="15" width="1.500" height="1.500" fill="#1a3f9e"/><rect x="1" y="17" width="1.500" height="1.500" fill="#1a3f9e"/></svg>
<svg class="a" style="left:803px;top:742px" width="5" height="20" viewBox="0 0 5 20" ><rect x="1" y="1" width="1.500" height="1.500" fill="#1a3f9e"/><rect x="3" y="3" width="1.500" height="1.500" fill="#1a3f9e"/><rect x="1" y="5" width="1.500" height="1.500" fill="#1a3f9e"/><rect x="3" y="7" width="1.500" height="1.500" fill="#1a3f9e"/><rect x="1" y="9" width="1.500" height="1.500" fill="#1a3f9e"/><rect x="3" y="11" width="1.500" height="1.500" fill="#1a3f9e"/><rect x="1" y="13" width="1.500" height="1.500" fill="#1a3f9e"/><rect x="3" y="15" width="1.500" height="1.500" fill="#1a3f9e"/><rect x="1" y="17" width="1.500" height="1.500" fill="#1a3f9e"/></svg>
<svg class="a" style="left:862px;top:742px" width="5" height="20" viewBox="0 0 5 20" ><rect x="1" y="1" width="1.500" height="1.500" fill="#1a3f9e"/><rect x="3" y="3" width="1.500" height="1.500" fill="#1a3f9e"/><rect x="1" y="5" width="1.500" height="1.500" fill="#1a3f9e"/><rect x="3" y="7" width="1.500" height="1.500" fill="#1a3f9e"/><rect x="1" y="9" width="1.500" height="1.500" fill="#1a3f9e"/><rect x="3" y="11" width="1.500" height="1.500" fill="#1a3f9e"/><rect x="1" y="13" width="1.500" height="1.500" fill="#1a3f9e"/><rect x="3" y="15" width="1.500" height="1.500" fill="#1a3f9e"/><rect x="1" y="17" width="1.500" height="1.500" fill="#1a3f9e"/></svg>
<svg class="a" style="left:119px;top:744px" width="17" height="17" viewBox="0 0 17 17" ><rect x="0.500" y="0.500" width="16" height="16" fill="#f4a84c" stroke="#fbe0b8"/><rect x="3" y="3" width="11" height="11" fill="#f8f0e0"/><path d="M6 4.500L12 8.500L6 12.500Z" fill="#222"/></svg>
<svg class="a" style="left:141px;top:744px" width="18" height="18" viewBox="0 0 18 18" ><path d="M1 8L8 1L17 9L12 16Z" fill="#2a5ec8"/><path d="M2 9Q8 15 15 12L14 15Q7 17 1 11Z" fill="#f8d020"/><path d="M5 5L12 11" stroke="#fff" stroke-width="1.500"/></svg>
<svg class="a" style="left:164px;top:743px" width="16" height="19" viewBox="0 0 16 19" ><path d="M3 8H13L12 18H4Z" fill="#c89858" stroke="#7a5a2a"/><path d="M5 1L6.500 9M8 0V9M11 1L9.500 9" stroke="#d04040" stroke-width="1.600"/><path d="M2 3L5 9M14 3L11 9" stroke="#3c8c3c" stroke-width="1.400"/></svg>
<div class="a t" style="left:191px;top:738px;color:#fff;font-size:14px;font-weight:bold">»</div>
<div class="a" style="left:219px;top:741px;width:114px;height:24px;border-radius:3px;background:linear-gradient(180deg,#5a97f4 0%,#3c80f0 12%,#3577ea 85%,#2c68d8 100%);border:1px solid #2a62d0"></div>
<div class="a t m" style="left:248px;top:747px;color:#fff;font-size:11px">123</div>
<svg class="a" style="left:228px;top:745px" width="17" height="16" viewBox="0 0 17 16" ><path d="M1 3H6L8 5H15V14H1Z" fill="#f4d468" stroke="#b89028"/><path d="M1 7H15" stroke="#fbe9a0"/></svg>
<div class="a" style="left:335px;top:741px;width:114px;height:24px;border-radius:3px;background:linear-gradient(180deg,#5a97f4 0%,#3c80f0 12%,#3577ea 85%,#2c68d8 100%);border:1px solid #2a62d0"></div>
<div class="a t m" style="left:364px;top:747px;color:#fff;font-size:11px">Lightscap...</div>
<svg class="a" style="left:344px;top:745px" width="17" height="17" viewBox="0 0 17 17" ><circle cx="6" cy="6" r="4.500" fill="#c02020"/><path d="M7 5L15 9L12 16H6Z" fill="#d8d8d8" stroke="#555"/><circle cx="10" cy="11" r="2" fill="#333"/></svg>
<div class="a" style="left:451px;top:741px;width:114px;height:24px;border-radius:3px;background:linear-gradient(180deg,#5a97f4 0%,#3c80f0 12%,#3577ea 85%,#2c68d8 100%);border:1px solid #2a62d0"></div>
<div class="a t m" style="left:480px;top:747px;color:#fff;font-size:11px"><span class="c">别墅中层</span>...</div>
<svg class="a" style="left:460px;top:743px" width="16" height="19" viewBox="0 0 16 19" ><path d="M3 8H13L12 18H4Z" fill="#c89858" stroke="#7a5a2a"/><path d="M5 1L6.500 9M8 0V9M11 1L9.500 9" stroke="#d04040" stroke-width="1.600"/><path d="M2 3L5 9M14 3L11 9" stroke="#3c8c3c" stroke-width="1.400"/></svg>
<div class="a" style="left:568px;top:741px;width:114px;height:24px;border-radius:3px;background:linear-gradient(180deg,#5a97f4 0%,#3c80f0 12%,#3577ea 85%,#2c68d8 100%);border:1px solid #2a62d0"></div>
<div class="a t m" style="left:597px;top:747px;color:#fff;font-size:11px"><span class="c">室内人</span>-<span class="c">室</span>...</div>
<svg class="a" style="left:577px;top:745px" width="17" height="17" viewBox="0 0 17 17" ><path d="M4 1H13L16 4V16H4Z" fill="#fff" stroke="#888"/><ellipse cx="7" cy="9" rx="5.500" ry="4.500" fill="none" stroke="#2a6ad8" stroke-width="2"/><path d="M1 11L13 5" stroke="#f0c020" stroke-width="1.500"/></svg>
<div class="a" style="left:683px;top:741px;width:114px;height:24px;border-radius:3px;background:#1c4fb4;border:1px solid #153f98;box-shadow:inset 1px 1px 2px #0f3080"></div>
<div class="a t m" style="left:712px;top:747px;color:#fff;font-weight:bold;font-size:11px">AutoCAD 2...</div>
<svg class="a" style="left:693px;top:745px" width="17" height="17" viewBox="0 0 17 17" ><rect x="0.500" y="0.500" width="16" height="16" fill="#3c9cc0" stroke="#d8ecf4"/><rect x="2" y="2" width="13" height="13" fill="#2a7ea6"/><text x="8.500" y="13.500" font-family="Liberation Sans,sans-serif" font-weight="bold" font-size="14" fill="#fff" text-anchor="middle">a</text></svg>
<div class="a t" style="left:814px;top:746px;color:#a8c8f8;font-size:12px">桌面</div>
<div class="a t" style="left:848px;top:738px;color:#cfe0ff;font-size:14px;font-weight:bold">»</div>
<svg class="a" style="left:875px;top:746px" width="16" height="12" viewBox="0 0 16 12" ><rect x="0.500" y="2.500" width="15" height="9" rx="1.500" fill="#f4f0e0" stroke="#222"/><path d="M2 1H14" stroke="#222" stroke-dasharray="1 1"/><path d="M2.500 5.500H13.500M2.500 8.500H13.500" stroke="#555" stroke-dasharray="1 1"/></svg>
<svg class="a" style="left:897px;top:745px" width="14" height="16" viewBox="0 0 14 16" ><path d="M0.500 0.500H12.500V11.500H9L10 15L6 11.500H0.500Z" fill="#fbf4c8" stroke="#222"/><text x="6.500" y="10" font-family="Liberation Sans,sans-serif" font-weight="bold" font-size="10" text-anchor="middle" fill="#000">?</text></svg>
<svg class="a" style="left:922px;top:744px" width="10" height="18" viewBox="0 0 10 18" ><path d="M3.500 1.500H8.500V4.500H3.500ZM1.500 3.500H6.500V6.500H1.500Z" fill="#2a62d0" stroke="#fff"/><path d="M2 12H8L5 15.500Z" fill="#fff"/></svg>
<div class="a" style="left:947px;top:734px;width:77px;height:34px;background:linear-gradient(180deg,#2ea0f0 0%,#1b8be8 10%,#1584e4 50%,#1276d4 90%,#0f60b8 100%);border-left:1px solid #0f58b0"></div>
<svg class="a" style="left:939px;top:744px" width="18" height="18" viewBox="0 0 18 18" ><circle cx="9" cy="9" r="8" fill="#3c90f0" stroke="#9cc8fb"/><path d="M10.500 5L6.500 9L10.500 13" stroke="#fff" stroke-width="2" fill="none"/></svg>
<svg class="a" style="left:958px;top:744px" width="20" height="18" viewBox="0 0 20 18" ><rect x="6" y="1" width="10" height="8" fill="#504878" stroke="#c8c8e0"/><rect x="1" y="6" width="10" height="8" fill="#504878" stroke="#c8c8e0"/><path d="M3 16H10M9 11H15" stroke="#d0d0d0" stroke-width="1.500"/></svg>
<div class="a t m" style="left:981px;top:748px;color:#fff;font-size:12px;letter-spacing:-1.4px">17:01</div>
<svg class="a" style="left:830px;top:625px" width="194" height="104" viewBox="0 0 194 104" ><path d="M18.500 5.500H178.500Q190.500 5.500 190.500 17.500V67.500Q190.500 79.500 178.500 79.500H150L166 99L131 79.500H18.500Q6.500 79.500 6.500 67.500V17.500Q6.500 5.500 18.500 5.500Z" fill="#ffffe1" stroke="#000" stroke-width="1"/></svg>
<svg class="a" style="left:844px;top:638px" width="18" height="20" viewBox="0 0 18 20" ><circle cx="9" cy="8.500" r="7.500" fill="#dfe8f8" stroke="#9fb4d8"/><path d="M6 15L8 19L10 15Z" fill="#dfe8f8" stroke="#9fb4d8"/><circle cx="9" cy="4.500" r="1.300" fill="#1c3fb0"/><path d="M7.500 7H9.800V12.500M7.500 12.500H11.500" stroke="#1c3fb0" stroke-width="1.600" fill="none"/></svg>
<div class="a t" style="left:872px;top:640px;font-weight:bold;font-size:12px;letter-spacing:0.7px">通信中心</div>
<div class="a" style="left:996px;top:640px;width:16px;height:16px;background:#ece9d8;border:1px solid #aca899"></div>
<svg class="a" style="left:996px;top:640px" width="16" height="16" viewBox="0 0 16 16" ><path d="M4.500 4.500L11.500 11.500M11.500 4.500L4.500 11.500" stroke="#000" stroke-width="2"/></svg>
<div class="a t c" style="left:852px;top:662px">使软件保持最新的简单方法。</div>
<div class="a t c" style="left:852px;top:680px;color:#0000e0;text-decoration:underline">单击此处。</div>
</body></html>
